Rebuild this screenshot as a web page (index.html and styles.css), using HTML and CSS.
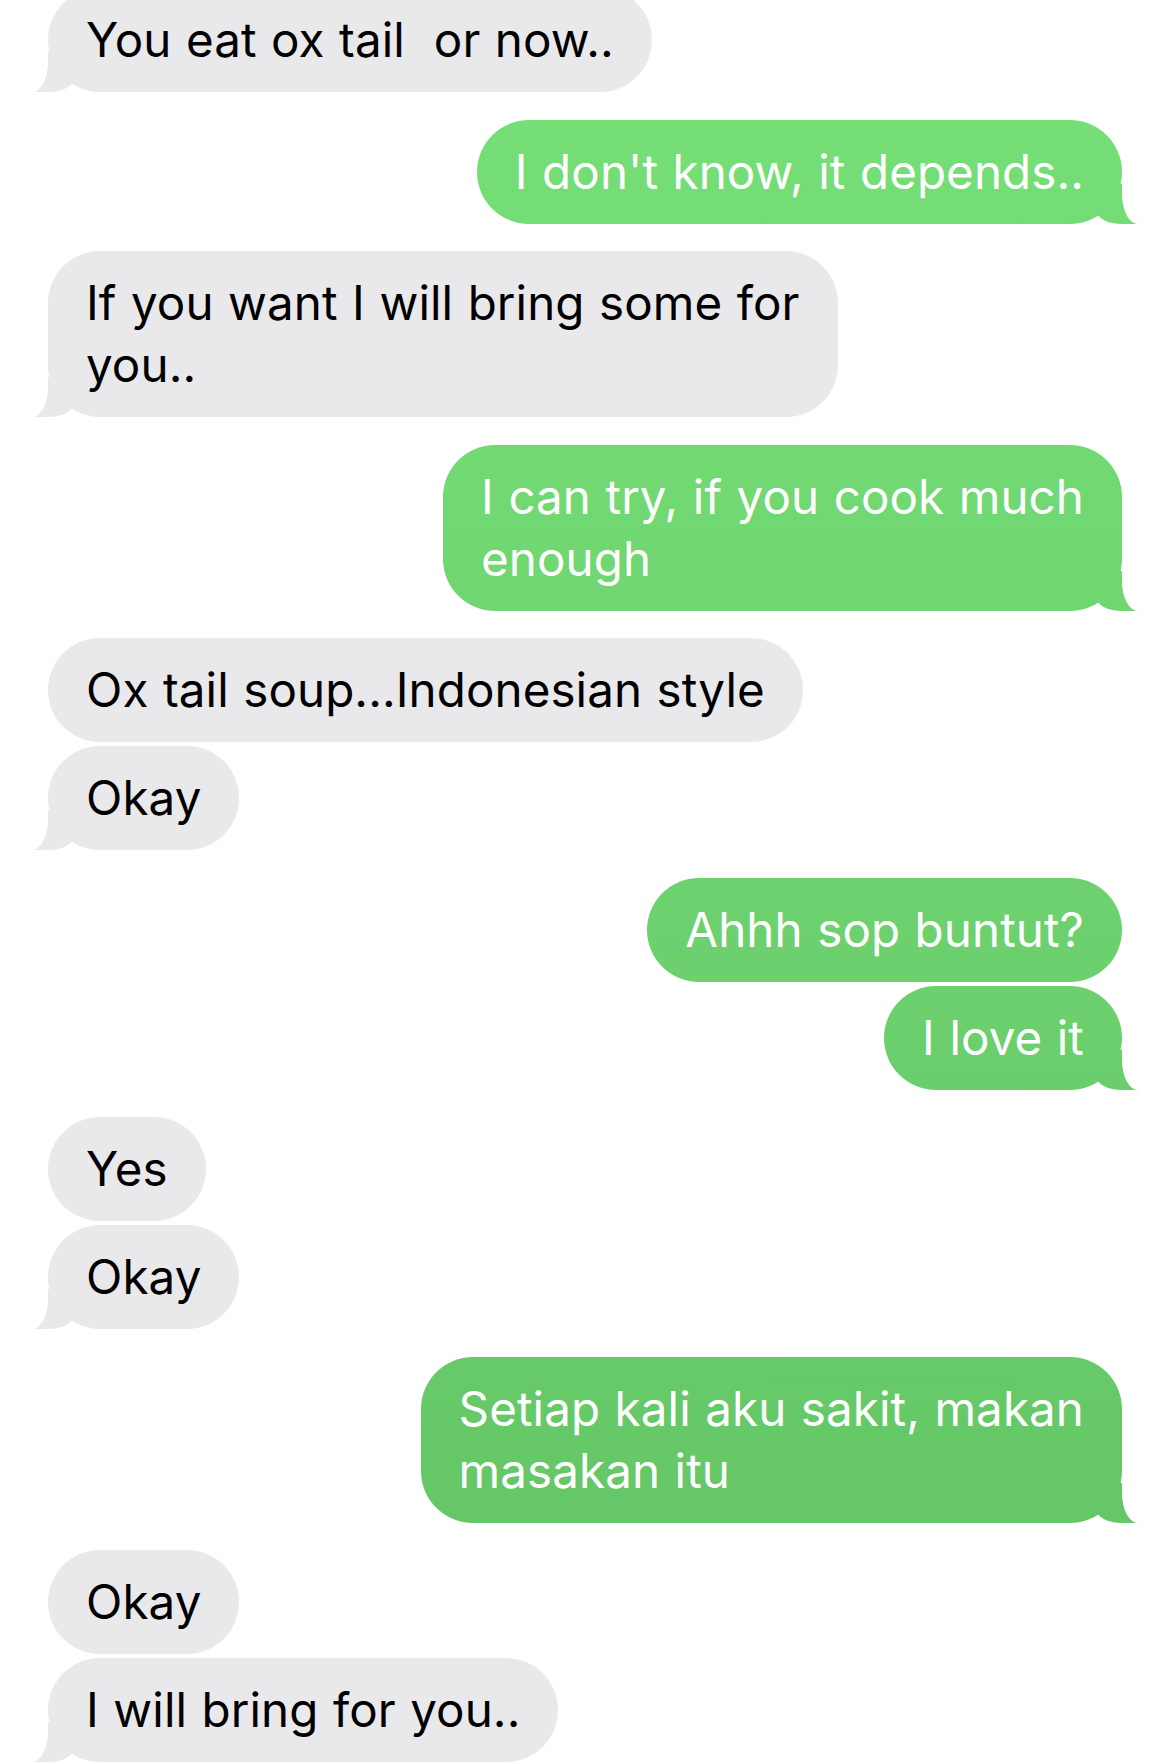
FILE: index.html
```html
<!DOCTYPE html>
<html lang="en">
<head>
    <meta charset="UTF-8">
    <meta name="viewport" content="width=device-width, initial-scale=1.0">
    <title>Messages</title>
    <link rel="stylesheet" href="styles.css">
</head>
<body>
    <div class="thread">
        <div class="group them">
            <div class="bubble tail">You eat ox tail &nbsp;or now..</div>
        </div>

        <div class="group me">
            <div class="bubble tail">I don't know, it depends..</div>
        </div>

        <div class="group them">
            <div class="bubble tail">If you want I will bring some for<br>you..</div>
        </div>

        <div class="group me">
            <div class="bubble tail">I can try, if you cook much<br>enough</div>
        </div>

        <div class="group them">
            <div class="bubble">Ox tail soup...Indonesian style</div>
            <div class="bubble tail">Okay</div>
        </div>

        <div class="group me">
            <div class="bubble">Ahhh sop buntut?</div>
            <div class="bubble tail">I love it</div>
        </div>

        <div class="group them">
            <div class="bubble">Yes</div>
            <div class="bubble tail">Okay</div>
        </div>

        <div class="group me">
            <div class="bubble tail">Setiap kali aku sakit, makan<br>masakan itu</div>
        </div>

        <div class="group them">
            <div class="bubble">Okay</div>
            <div class="bubble tail">I will bring for you..</div>
        </div>
    </div>
</body>
</html>
```

FILE: styles.css
```css
* {
    margin: 0;
    padding: 0;
    box-sizing: border-box;
}

body {
    background: #ffffff;
    font-family: Inter, "Noto Sans", sans-serif;
    overflow: hidden;
}

.thread {
    display: flex;
    flex-direction: column;
    gap: 27.5px;
    padding: 0 48px;
    margin-top: -12px;
}

.group {
    display: flex;
    flex-direction: column;
    gap: 4px;
}

.them {
    align-items: flex-start;
}

.me {
    align-items: flex-end;
}

.bubble {
    position: relative;
    white-space: nowrap;
    padding: 21px 38px;
    border-radius: 52px;
    font-size: 47.5px;
    line-height: 62px;
    letter-spacing: 0.1px;
    word-spacing: 1px;
}

.them .bubble {
    background: #e9e9eb;
    color: #000000;
}

.me .bubble {
    background: linear-gradient(#77e078, #62c364) fixed;
    color: #ffffff;
}

/* tail */
.bubble.tail::before,
.bubble.tail::after {
    content: "";
    position: absolute;
    bottom: 0;
    height: 40px;
}

.them .bubble.tail::before {
    left: -16px;
    width: 42px;
    background: inherit;
    border-bottom-right-radius: 26px 14px;
}

.them .bubble.tail::after {
    left: -30px;
    width: 30px;
    background: #ffffff;
    border-bottom-right-radius: 16px 30px;
}

.me .bubble.tail::before {
    right: -16px;
    width: 42px;
    background: inherit;
    border-bottom-left-radius: 26px 14px;
}

.me .bubble.tail::after {
    right: -30px;
    width: 30px;
    background: #ffffff;
    border-bottom-left-radius: 16px 30px;
}
```
